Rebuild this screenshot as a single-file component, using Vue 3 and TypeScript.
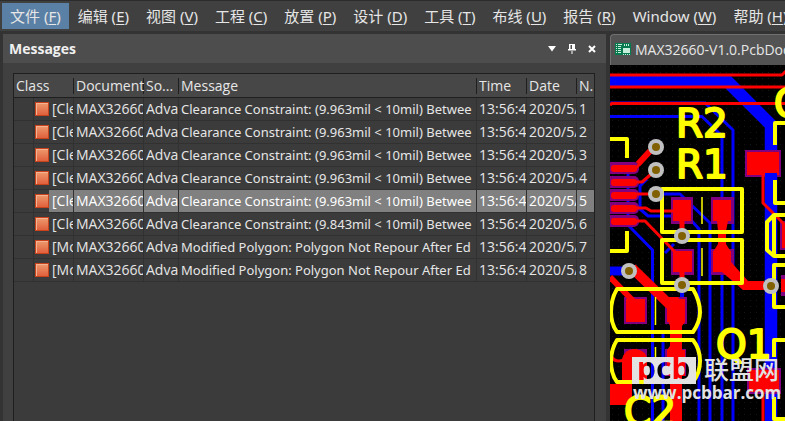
<script setup lang="ts">
interface MenuEntry {
  label: string
  key: string
}

interface Message {
  id: number
  kind: string
  text: string
}

const menu: MenuEntry[] = [
  { label: '文件', key: 'F' },
  { label: '编辑', key: 'E' },
  { label: '视图', key: 'V' },
  { label: '工程', key: 'C' },
  { label: '放置', key: 'P' },
  { label: '设计', key: 'D' },
  { label: '工具', key: 'T' },
  { label: '布线', key: 'U' },
  { label: '报告', key: 'R' },
  { label: 'Window', key: 'W' },
  { label: '帮助', key: 'H' },
]

const clearance = (mil: string) => `Clearance Constraint: (${mil}mil < 10mil) Betwee`
const polygon = 'Modified Polygon: Polygon Not Repour After Ed'

const messages: Message[] = [
  { id: 1, kind: '[Cle', text: clearance('9.963') },
  { id: 2, kind: '[Cle', text: clearance('9.963') },
  { id: 3, kind: '[Cle', text: clearance('9.963') },
  { id: 4, kind: '[Cle', text: clearance('9.963') },
  { id: 5, kind: '[Cle', text: clearance('9.963') },
  { id: 6, kind: '[Cle', text: clearance('9.843') },
  { id: 7, kind: '[Mo', text: polygon },
  { id: 8, kind: '[Mo', text: polygon },
]
const selected = 5

const pinRows = [168, 182, 195, 208, 221]
const vias = [
  [656, 147], [656, 170], [656, 194], [682, 236], [682, 285], [629, 271], [771, 286],
]
</script>

<template>
  <div class="app">
    <nav class="menu">
      <button v-for="(m, i) in menu" :key="m.key" type="button" class="menu-item" :class="{ active: i === 0 }">{{ m.label }} (<u>{{ m.key }}</u>)</button>
    </nav>
    <main class="work">
      <section class="panel">
        <header class="panel-head">
          <h1>Messages</h1>
          <div class="tools">
            <button type="button" aria-label="Menu">
              <svg width="10" height="10" viewBox="0 0 10 10"><path d="M1 2h8L5 7.500z" fill="#fff" /></svg>
            </button>
            <button type="button" aria-label="Pin">
              <svg width="10" height="10" viewBox="0 0 10 10"><path d="M2 0h6v5h1v1.500H1V5h1zM3.500 1v4H5V1zM4.500 6h1v4h-1z" fill="#fff" fill-rule="evenodd" /></svg>
            </button>
            <button type="button" aria-label="Close">
              <svg width="10" height="10" viewBox="0 0 10 10"><path d="M2 2l6 6M8 2L2 8" stroke="#fff" stroke-width="2" /></svg>
            </button>
          </div>
        </header>
        <div class="list">
          <table>
            <colgroup>
              <col class="c-indent" /><col class="c-class" /><col class="c-doc" /><col class="c-src" />
              <col /><col class="c-time" /><col class="c-time" /><col class="c-no" />
            </colgroup>
            <thead>
              <tr>
                <th colspan="2"><div>Class</div></th>
                <th><div>Document</div></th>
                <th><div>So...</div></th>
                <th><div>Message</div></th>
                <th><div>Time</div></th>
                <th><div>Date</div></th>
                <th><div>N.</div></th>
              </tr>
            </thead>
            <tbody>
              <tr v-for="m in messages" :key="m.id" :class="{ selected: m.id === selected }">
                <td class="indent"></td>
                <td class="kind"><div><i class="mark"></i><span>{{ m.kind }}</span></div></td>
                <td><div>MAX32660</div></td>
                <td><div>Adva</div></td>
                <td class="message"><div>{{ m.text }}</div></td>
                <td><div>13:56:4</div></td>
                <td><div>2020/5/</div></td>
                <td><div>{{ m.id }}</div></td>
              </tr>
            </tbody>
          </table>
        </div>
      </section>

      <section class="editor">
        <button type="button" class="tab">
          <svg width="16" height="12" viewBox="0 0 16 12">
            <path d="M0 0h16v12H0z" fill="#087a50" />
            <path d="M1 1h1v1H1zM1 3h1v1H1zM1 5h1v1H1zM1 7h1v1H1zM1 9h1v1H1zM3 1h4v1H3zM3 3h3v1H3zM3 5h3v1H3zM3 7h3v1H3zM3 9h3v1H3zM9 1h1v2H9zM11 1h1v2h-1zM13 1h1v2h-1zM8 5h7v5H8zM8 11h1v1H8zM10 11h1v1h-1zM12 11h1v1h-1zM14 11h1v1h-1z" fill="#c7eedb" />
          </svg>
          <span>MAX32660-V1.0.PcbDoc</span>
        </button>
        <div class="board">
          <svg viewBox="610 65 175 356" preserveAspectRatio="xMinYMin slice">
            <defs>
              <pattern id="dots" width="6" height="6" patternUnits="userSpaceOnUse">
                <rect width="1" height="1" fill="#151515" />
              </pattern>
              <mask id="logo">
                <rect x="632" y="357" width="64" height="27" fill="#fff" />
                <text class="logo-text" x="637" y="379" fill="#000">pcb</text>
              </mask>
            </defs>
            <rect x="610" y="65" width="175" height="356" fill="#000" />
            <rect x="610" y="65" width="175" height="356" fill="url(#dots)" />

            <!-- bottom layer -->
            <g class="line" stroke="#00f" stroke-width="3">
              <path d="M610 81H727L771 125V421" stroke-width="12.500" />
              <path d="M610 116.500H702L722 136V421M704 102L733 130V421" />
              <path d="M610 102H704" stroke="#200080" stroke-width="2" />
              <path d="M660 194H680L710 223V421M690 219L699 229V421" />
              <path d="M628 172V225L652.500 250V421M663 330V421" />
              <path d="M647 179L640 186V209L648 216H676M665 253L674 244" />
              <path d="M610 271H629" stroke-width="9" />
              <path d="M682 285V300" stroke-width="4" />
            </g>

            <!-- pad clearances -->
            <g fill="#800080">
              <rect v-for="y in pinRows" :key="y" x="604" :y="y - 6" width="35" height="12" rx="5" />
              <path d="M671 197h22v27h-22zM711 197h23v27h-23zM671 249h23v26h-23zM711 249h23v26h-23z" />
              <path d="M745 150h36v27h-36zM747 368h34v26h-34zM780 221h5v29h-5zM781 275h4v21h-4z" />
              <path d="M624 297h23v27h-23zM665 297h22v27h-22zM624 349h23v27h-23zM665 349h21v27h-21z" />
            </g>

            <!-- top layer -->
            <g fill="#f00">
              <rect v-for="y in pinRows" :key="y" x="611" :y="y - 3" width="26" height="7" rx="3" />
              <path d="M673 200h18v21h-18zM713 200h18v21h-18zM673 251h19v21h-19zM713 251h18v21h-18z" />
              <path d="M747 152h32v23h-32zM749 370h30v22h-30zM782 223h3v25h-3zM781 279h4v13h-4z" />
              <path d="M626 299h19v23h-19zM667 299h18v23h-18z" />
              <path d="M717 221H728L726 231V244L731 252V262L748 281H764V290H743L722 272L713 252L718 244V231Z" />
              <path d="M661 297H678L685 307V322L682 326V350H685V376H682V421H670V376L667 374V350L670 346V326L667 318V308Z" />
              <path d="M622 384V359Q625 348 636 349Q647 351 647 360V384H632V405H610V384Z" />
            </g>
            <g class="line" stroke="#f00" stroke-width="3">
              <path d="M610 75H782L786 71M610 87H785M610 105L612 103.500H785" />
              <path d="M656 147L636 168M656 170L642 182H636M656 194H636M636 208H646L651 211H673M636 221H645L675 252" />
              <path d="M650 151L638 164" stroke-width="6" />
              <path d="M682 220V236M682 271V285" stroke-width="5" />
              <path d="M763 174V203L785 225M763 391V421" />
              <path d="M632 268L670 305" stroke-width="10" />
              <path d="M610 277L636 304" stroke-width="6" />
              <path d="M612 357Q615 363 624 360" />
            </g>
            <path d="M771 173V190" class="line" stroke="#00f" stroke-width="12" />

            <!-- silkscreen -->
            <g class="line" stroke="#ff0" stroke-width="4">
              <path d="M610 139H627V158M610 251H627V231" />
              <path d="M662 189H742V232H662ZM662 240H742V283H662Z" />
              <path d="M617 289H693Q700 301 700 312Q700 322 693 332H617Q611 324 611 312Q611 299 617 289Z" />
              <path d="M617 340H693Q700 349 700 361Q700 373 693 382H617Q611 374 611 362Q611 349 617 340Z" />
              <path d="M786 123H775V145M775 180V203H786M786 215H774L767 222V250L774 256H786M774 215V256M786 265H774V307H786M786 340H774V357M774 397V419H786" />
              <path d="M702 197V224M702 248V276M655.500 297V325M655.500 347V370" stroke-width="1.500" />
            </g>
            <g class="ref">
              <text x="676" y="137">R2</text>
              <text x="676" y="178">R1</text>
              <text x="716" y="358">Q1</text>
              <text x="624" y="425">C2</text>
              <text x="774" y="117">C</text>
            </g>

            <g v-for="v in vias" :key="v.join()">
              <circle :cx="v[0]" :cy="v[1]" r="8" fill="#c0c0c0" />
              <circle :cx="v[0]" :cy="v[1]" r="4" fill="#806000" />
            </g>

            <g class="watermark">
              <rect x="632" y="357" width="64" height="27" mask="url(#logo)" />
              <text class="brand" x="704" y="379">联盟网</text>
              <text class="site" x="633" y="399">www.pcbbar.com</text>
            </g>
          </svg>
        </div>
      </section>
    </main>
  </div>
</template>

<style>
body {
  margin: 0;
  background: #333;
}
</style>

<style scoped>
.app {
  display: flex;
  flex-direction: column;
  height: 100vh;
  overflow: hidden;
  background: #333;
  color: #e6e6e6;
  font-family: "Open Sans", "Noto Sans CJK SC", sans-serif;
  font-size: 14px;
}

button {
  border: 0;
  background: none;
  color: inherit;
  font: inherit;
}

.menu {
  display: flex;
  flex: none;
  gap: 1px;
  height: 26px;
  padding: 2px 2px;
  border-top: 1px solid #2c2c2c;
  background: #404040;
  overflow: hidden;
}

.menu-item {
  flex: none;
  padding: 0 8px;
  font-family: "Noto Sans", "Noto Sans CJK SC", sans-serif;
  font-size: 15px;
  line-height: 26px;
  white-space: nowrap;
}

.menu-item.active {
  background: #5a80a5;
}

.menu-item u {
  text-underline-offset: 2px;
}

.work {
  display: grid;
  flex: 1;
  grid-template-columns: minmax(0, 1fr) 175px;
  gap: 4px;
  min-height: 0;
  padding: 3px 0 0 3px;
}

.panel {
  display: flex;
  flex-direction: column;
  background: #404040;
}

.panel-head {
  display: flex;
  flex: none;
  align-items: center;
  justify-content: space-between;
  height: 29px;
  padding: 0 9px 0 6px;
  background: #4d4d4d;
}

.panel-head h1 {
  margin: 0;
  color: #f0f0f0;
  font-size: 14px;
  font-weight: 700;
}

.tools {
  display: flex;
  gap: 10px;
}

.tools button {
  display: flex;
  padding: 0;
}

.list {
  flex: 1;
  margin: 10px 11px 0 10px;
  border: 1px solid #1f1f1f;
  border-width: 1px 1px 0;
  background: #3b3b3b;
}

table {
  width: 100%;
  border-collapse: separate;
  border-spacing: 0;
  table-layout: fixed;
}

.c-indent { width: 20px; }
.c-class { width: 40px; }
.c-doc { width: 70px; }
.c-src { width: 35px; }
.c-time { width: 50px; }
.c-no { width: 17px; }

th,
td {
  height: 22px;
  padding: 0 0 0 2px;
  border-right: 1px solid #313131;
  border-bottom: 1px solid #313131;
  font-weight: 400;
  line-height: 22px;
  text-align: left;
  white-space: nowrap;
}

th {
  height: 23px;
  border-right: 0;
  border-bottom-color: #1f1f1f;
  background: linear-gradient(#1f1f1f, #1f1f1f) right center / 1px 16px no-repeat #474747;
}

th:last-child {
  background: #474747;
}

td:last-child {
  border-right: 0;
}

td > div,
th > div {
  overflow: hidden;
}

.message {
  font-family: "Noto Sans", sans-serif;
  font-size: 13px;
}

.kind {
  padding-left: 1px;
}

.kind div {
  display: flex;
  align-items: center;
  gap: 3px;
}

.mark {
  flex: none;
  box-sizing: border-box;
  width: 14px;
  height: 14px;
  border: 1px solid #c8421c;
  background: linear-gradient(#ee9a6e, #e0603c);
  box-shadow: inset 1px 1px #f3b292;
}

.selected td {
  background: #808080;
  color: #fff;
}

.selected .indent {
  background: none;
}

.selected .kind {
  background: linear-gradient(90deg, #3b3b3b 15px, #808080 15px);
}

.editor {
  display: flex;
  flex-direction: column;
  min-width: 0;
  overflow: hidden;
}

.tab {
  display: flex;
  flex: none;
  align-items: center;
  gap: 4px;
  height: 31px;
  padding: 0 4px 2px;
  border: 1px solid #707070;
  border-width: 1px 0 0 1px;
  border-radius: 4px 0 0 0;
  background: #535353;
  white-space: nowrap;
}

.tab svg {
  flex: none;
}

.board {
  flex: 1;
  min-height: 0;
}

.board svg {
  display: block;
  width: 100%;
  height: 100%;
}

.line {
  fill: none;
  stroke-linejoin: round;
}

.ref {
  fill: #ff0;
  stroke: #ff0;
  stroke-width: 2;
  stroke-linejoin: round;
  font-family: "DejaVu Sans", sans-serif;
  font-size: 39px;
}

.watermark {
  fill: #e2e2e2;
}

.brand {
  font-family: "Noto Sans CJK SC", sans-serif;
  font-size: 25px;
  font-weight: 500;
}

.site {
  font-size: 17px;
  font-weight: 700;
}

.logo-text {
  font-family: "Noto Sans", sans-serif;
  font-size: 30px;
  font-weight: 700;
}
</style>
